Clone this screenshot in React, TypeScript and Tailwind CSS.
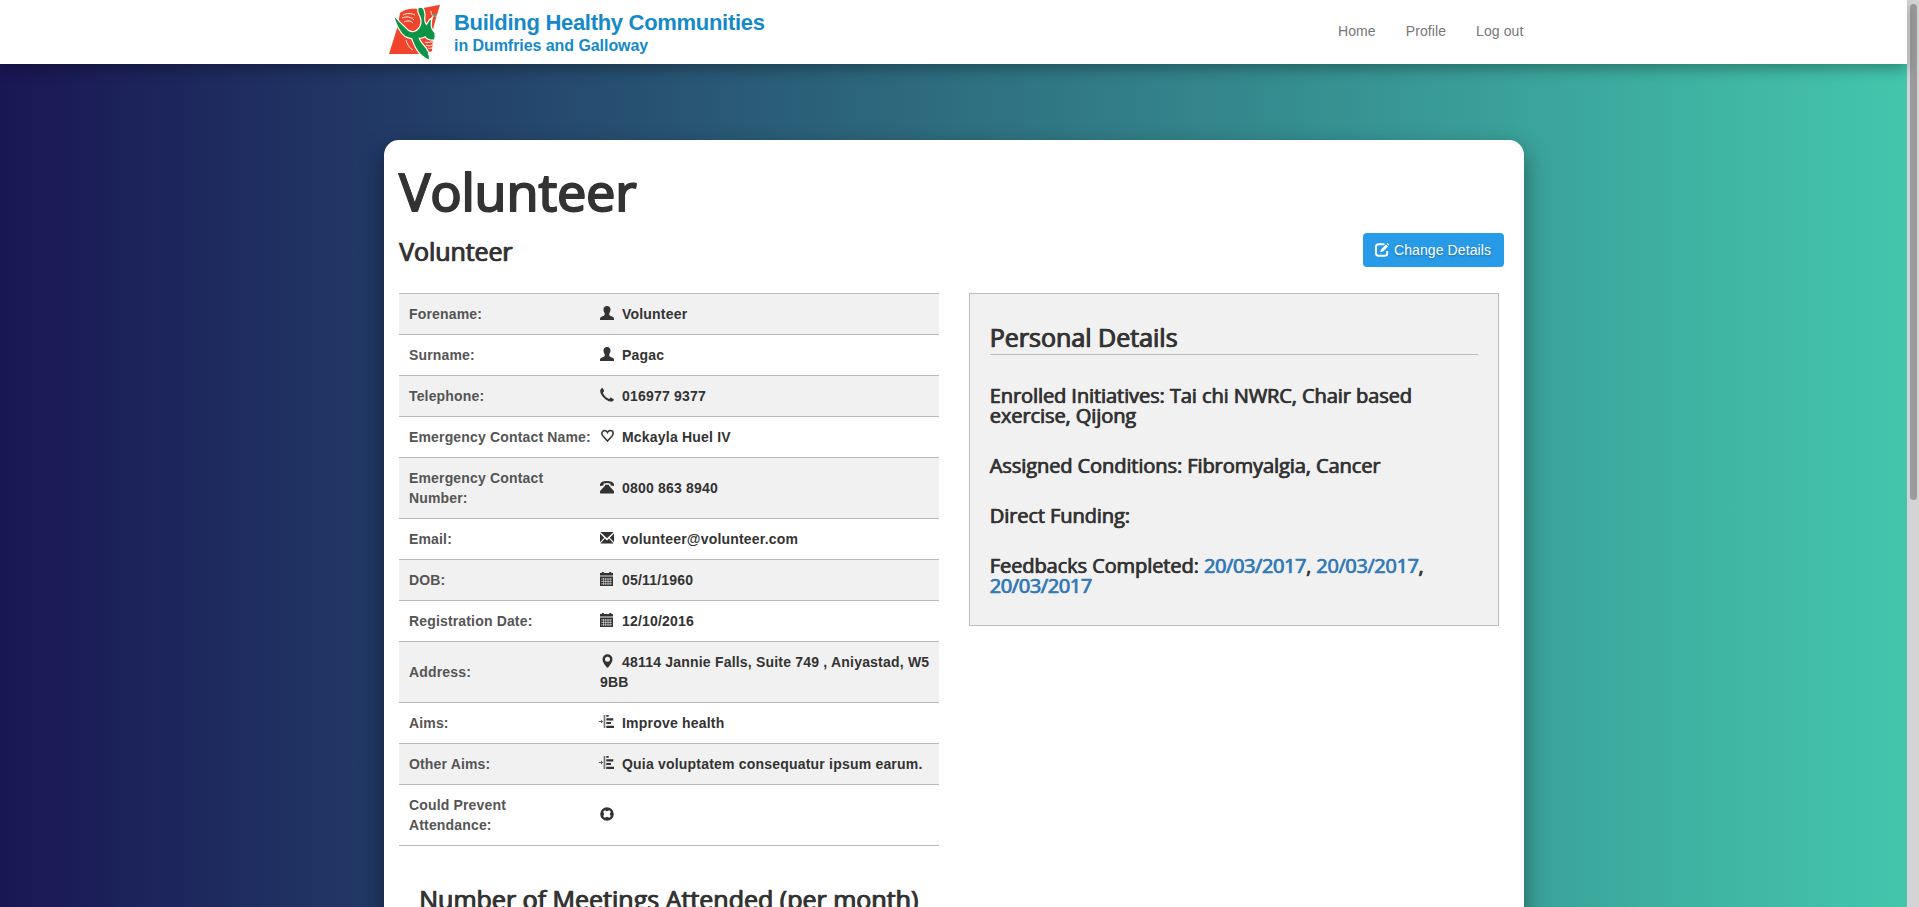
import type { ReactNode } from "react";

const sans = "font-['Liberation_Sans',Arial,sans-serif]";
const heading = "font-['Open_Sans',sans-serif] font-normal text-[#333]";
const subheading = "text-[25px] [-webkit-text-stroke:0.600px] [text-shadow:0.800px_0_0_currentColor]";

type IconName = "user" | "phone" | "heart" | "telephone" | "mail" | "calendar" | "pin" | "indent" | "remove";

const icons: Record<IconName, ReactNode> = {
  user: <path d="M7 0C4.800 0 3.500 1.400 3.500 3.400c0 1.700.5 2.700 1.200 3.600v1.500c0 .6-.4.900-1 1.200L1 10.900c-.7.4-1 .9-1 1.600V14h14v-1.500c0-.7-.3-1.200-1-1.600l-2.900-1.200c-.5-.3-.8-.6-.8-1.200V7c.7-.9 1.200-1.900 1.200-3.600C10.500 1.400 9.200 0 7 0Z" />,
  phone: <path d="M1.500.4c.4-.5.900-.5 1.200-.1l1.400 2.200c.2.4.1.700-.2 1L2.900 4.400c.5 2.500 3.800 5.800 6.300 6.500l1.100-1.100c.3-.3.600-.3.900-.1l2.400 1.500c.5.3.5.700.1 1.100-.8.900-1.800 1.500-3.100 1.300C6.200 12.900.500 7.500.2 3.200.1 2.100.6 1.200 1.500.4Z" />,
  heart: <path d="M7.500 3.500C6.800 2.200 5.900 1.600 4.700 1.600 3 1.600 1.800 2.900 1.800 4.500c0 2.500 3.200 4.300 5.700 7.600 2.500-3.300 5.700-5.100 5.700-7.600 0-1.600-1.200-2.900-2.900-2.900-1.200 0-2.100.600-2.800 1.900Z" fill="none" stroke="currentColor" strokeWidth="1.500" />,
  telephone: (
    <path d="M0 4.300C.5 2 3.200.9 7 .9s6.500 1.100 7 3.400v1.200c0 .4-.2.500-.6.500l-2.400-.4c-.3 0-.5-.2-.5-.6V3.700C9.500 3.300 8.300 3.100 7 3.100s-2.500.2-3.500.6V5c0 .400-.2.600-.5.600L.6 6c-.4 0-.6-.1-.6-.5ZM5 4.800h4v1l4 4.200c.6.600 1 1 1 1.800v1c0 .4-.2.700-.7.700H.7c-.5 0-.7-.3-.7-.7v-1C0 11 .4 10.600 1 10l4-4.200Z" />
  ),
  mail: <path d="M.3 1h13.400L7 7.300ZM0 2.500l4.200 4.200L0 11.200ZM14 2.500v8.700L9.800 6.700ZM5 7.500l2 1.900 2-1.900 4.600 5H.4Z" />,
  calendar: (
    <>
      <path d="M0 1h1.800V0h2v1h5.400V0h2v1H13v2.300H0Z" />
      <path d="M0 3.300h13v1.600H0Z" opacity=".55" />
      <path d="M0 4.900h13V14H0Z" />
      <path d="M1 7h11M1 9.400h11M1 11.800h11M3.500 6v7M5.700 6v7M8 6v7M10.200 6v7" stroke="#d8d8d8" strokeWidth=".65" />
    </>
  ),
  pin: <path fillRule="evenodd" d="M7.500.2a5 5 0 0 0-5 5c0 3 2.500 5.500 4.200 8.100.4.600 1.200.6 1.600 0 1.700-2.600 4.200-5.100 4.200-8.100a5 5 0 0 0-5-5Zm0 2.500a2.500 2.500 0 1 1 0 5 2.500 2.500 0 0 1 0-5Z" />,
  indent: (
    <>
      <path d="M3.700 0h1.100v13H3.700ZM-1.200 6H1V4.600L3.100 6.500 1 8.400V7h-2.200Z" opacity=".8" />
      <path d="M6.300 0h2.400v1.800H6.300ZM6.300 3.300h7v2.100h-7ZM6.300 7h4.700v2.100H6.300ZM6.300 10.800H14V13H6.300Z" />
      <path d="M4.800 0h.8v13h-.8Z" opacity=".3" />
    </>
  ),
  remove: (
    <path fillRule="evenodd" d="M7 .2a6.800 6.800 0 1 0 0 13.600A6.800 6.800 0 0 0 7 .2ZM4.700 3.200 7 4.200l2.300-1 1.500 1.500-1 2.300 1 2.300-1.500 1.500-2.300-1-2.300 1-1.500-1.500 1-2.300-1-2.300Z" />
  ),
};

function Icon({ name }: { name: IconName }) {
  return (
    <svg viewBox="0 0 14 14" className="relative top-px mr-2 inline-block size-3.5 overflow-visible fill-current align-baseline">
      {icons[name]}
    </svg>
  );
}

const details: { label: string; value: string; icon: IconName }[] = [
  { label: "Forename:", value: "Volunteer", icon: "user" },
  { label: "Surname:", value: "Pagac", icon: "user" },
  { label: "Telephone:", value: "016977 9377", icon: "phone" },
  { label: "Emergency Contact Name:", value: "Mckayla Huel IV", icon: "heart" },
  { label: "Emergency Contact\nNumber:", value: "0800 863 8940", icon: "telephone" },
  { label: "Email:", value: "volunteer@volunteer.com", icon: "mail" },
  { label: "DOB:", value: "05/11/1960", icon: "calendar" },
  { label: "Registration Date:", value: "12/10/2016", icon: "calendar" },
  { label: "Address:", value: "48114 Jannie Falls, Suite 749 , Aniyastad, W5 9BB", icon: "pin" },
  { label: "Aims:", value: "Improve health", icon: "indent" },
  { label: "Other Aims:", value: "Quia voluptatem consequatur ipsum earum.", icon: "indent" },
  { label: "Could Prevent\nAttendance:", value: "", icon: "remove" },
];

function Logo() {
  return (
    <div className="flex pt-1">
      <svg viewBox="0 0 54 58" className="h-[58px] w-[54px] shrink-0">
        <path d="M1 50 9.500 23 12 9C16 5 24 4 30 5L52 .8 45.500 23 44 47 36 50Z" fill="#f0452a" />
        <path
          d="M5.300 11C7 17 8.500 21 10.300 24c2 4 4 6.500 6.700 8.500 2 1.300 4.500 1.800 6.700 2.300C25 38 26 41 28 44.500c3 5.500 8 9.500 13.300 11.700.7-3-.2-6-1-8.500-1.500-3.500-4-6.500-6.600-9-1-1.500-2-3-2.400-4.400 2 .2 4-.6 5.700-1.600 1 1.500 2 2.500 3.300 2.600 2 .9 4.500 1 5.700.7 1.500-2 1.500-4.500 1-6.700-1-2-2.500-3.300-3.300-5.300-.8-3-.5-7 .8-11-2.500 2-5 4.500-6 7.500-2-2-2-6-1.500-9.500C36.500 7 36.500 5.500 35.300 4.300 33.500 3 31.500 2.800 30 4c-1 3 .5 6 2 8.700 1.200 3 1.500 6 .2 8.800-1.200 3-3 5-6.200 6-3 .7-5.500-.5-7.500-3C14.500 21 9 15 5.300 11Z"
          fill="#0c9346" stroke="#fff" strokeWidth="1.200"
        />
        <path d="M15 11c4-2 8-2 12 0M14 14c5-2 9-1 12 2M16 18c4-2 7-1 9 1M18 36c1 4 3 8 7 10M37 38c3 1 5 0 7 0M38 41c2 1 4 1 6 0M40 44c2 1 2 0 4 0M43 7c0 4 2 6 6 5" stroke="#fff" strokeWidth=".9" fill="none" />
        <path d="M44 10 49 9 47 14Z" fill="#7d8b62" />
      </svg>
      <div className="ml-[12px] whitespace-nowrap font-bold leading-none text-[#1589c9]">
        <div className="mt-[7px] text-[22px] leading-[24px] tracking-[-0.300px]">Building Healthy Communities</div>
        <div className="mt-[2px] text-[16px] leading-[18px] tracking-[-0.060px]">in Dumfries and Galloway</div>
      </div>
    </div>
  );
}

function DateLink({ children }: { children: string }) {
  return <a className="tracking-[-0.400px] text-[#337ab7]">{children}</a>;
}

export default function App() {
  return (
    <div className={`flex h-[907px] w-[1919px] overflow-hidden ${sans}`}>
      <div className="flex h-full w-[1907px] flex-col bg-linear-to-r from-[#191654] to-[#43c6ac] [--tw-gradient-position:to_right]">
        <nav className="relative h-16 shrink-0 bg-white shadow-[0_6px_12px_0_rgba(0,0,0,0.28)]">
          <div className="mx-auto flex w-[1140px] justify-between pl-[4.500px]">
            <Logo />
            <div className="flex gap-[30px] pt-[21px] text-sm leading-5 tracking-[0.100px] text-[#777]">
              <a>Home</a>
              <a>Profile</a>
              <a>Log out</a>
            </div>
          </div>
        </nav>

        <main className="mx-auto mt-[76px] h-[900px] w-[1140px] shrink-0 rounded-[15px] bg-white px-[15px] shadow-[0_10px_25px_0_rgba(0,0,0,0.42)]">
          <h1 className={`${heading} pt-[22px] pl-[0.700px] text-[52px] leading-[57px] [-webkit-text-stroke:2px_#333] [text-shadow:1px_0_0_#333]`}>Volunteer</h1>
          <div className="flex h-[74px] justify-between pt-[14px]">
            <h3 className={`${heading} ${subheading} pt-[5px] pl-[0.500px] leading-[26px] tracking-[-0.100px]`}>Volunteer</h3>
            <button className="mr-[5px] flex h-[34px] w-[141px] items-center justify-center gap-[5px] rounded bg-[#289be8] text-sm tracking-[0.100px] text-white [text-shadow:0_1px_2px_rgba(0,0,0,0.3)]">
              <svg viewBox="0 0 14 14" className="size-3.5 overflow-visible">
                <path d="M9.500 1.200H3.600A2.600 2.600 0 0 0 1 3.800v6.400a2.600 2.600 0 0 0 2.600 2.600h6a2.600 2.600 0 0 0 2.600-2.600V8" fill="none" stroke="#fff" strokeWidth="2" />
                <path d="M5.200 9.200 6 6.500 11 1.500l2 2-5 5ZM11.700.8l.8-.8L14.300 1.800l-.8.8Z" fill="#fff" />
              </svg>
              Change Details
            </button>
          </div>

          <div className="flex items-start gap-[30px]">
            <div className="w-[540px] border-b border-[#bbb]">
              {details.map((row) => (
                <div key={row.label} className="flex items-center border-t border-[#bbb] py-[10px] pl-[10.500px] text-sm leading-5 font-bold tracking-[0.200px] odd:bg-[#f1f1f1]">
                  <div className="w-[191px] shrink-0 whitespace-pre-line tracking-[0.160px] text-[#555]">{row.label}</div>
                  <div className="grow pr-[5px] text-[#333]">
                    <Icon name={row.icon} />
                    {row.value}
                  </div>
                </div>
              ))}
            </div>

            <section className={`${heading} h-[333px] w-[530px] border border-[#bbb] bg-[#f1f1f1] px-5 text-xl leading-[20px] tracking-[-0.080px]`}>
              <h3 className={`${subheading} mt-[30px] h-[31px] border-b border-[#bbb] leading-[27px] tracking-normal`}>Personal Details</h3>
              <div className="mt-[31px] flex flex-col gap-[30px] [-webkit-text-stroke:0.400px] [text-shadow:0.700px_0_0_currentColor]">
                <h4>Enrolled Initiatives: Tai chi NWRC, Chair based exercise, Qijong</h4>
                <h4>Assigned Conditions: Fibromyalgia, Cancer</h4>
                <h4>Direct Funding:</h4>
                <h4>
                  Feedbacks Completed: <DateLink>20/03/2017</DateLink>, <DateLink>20/03/2017</DateLink>, <DateLink>20/03/2017</DateLink>
                </h4>
              </div>
            </section>
          </div>

          <h3 className={`${heading} ${subheading} mt-[40px] pl-[20.500px] leading-[26px]`}>Number of Meetings Attended (per month)</h3>
        </main>
      </div>

      <div className="flex w-3 justify-center bg-[#d4d4d4] pt-[4px]">
        <div className="h-[496px] w-[7px] rounded-full bg-[#9b9b9b]" />
      </div>
    </div>
  );
}
